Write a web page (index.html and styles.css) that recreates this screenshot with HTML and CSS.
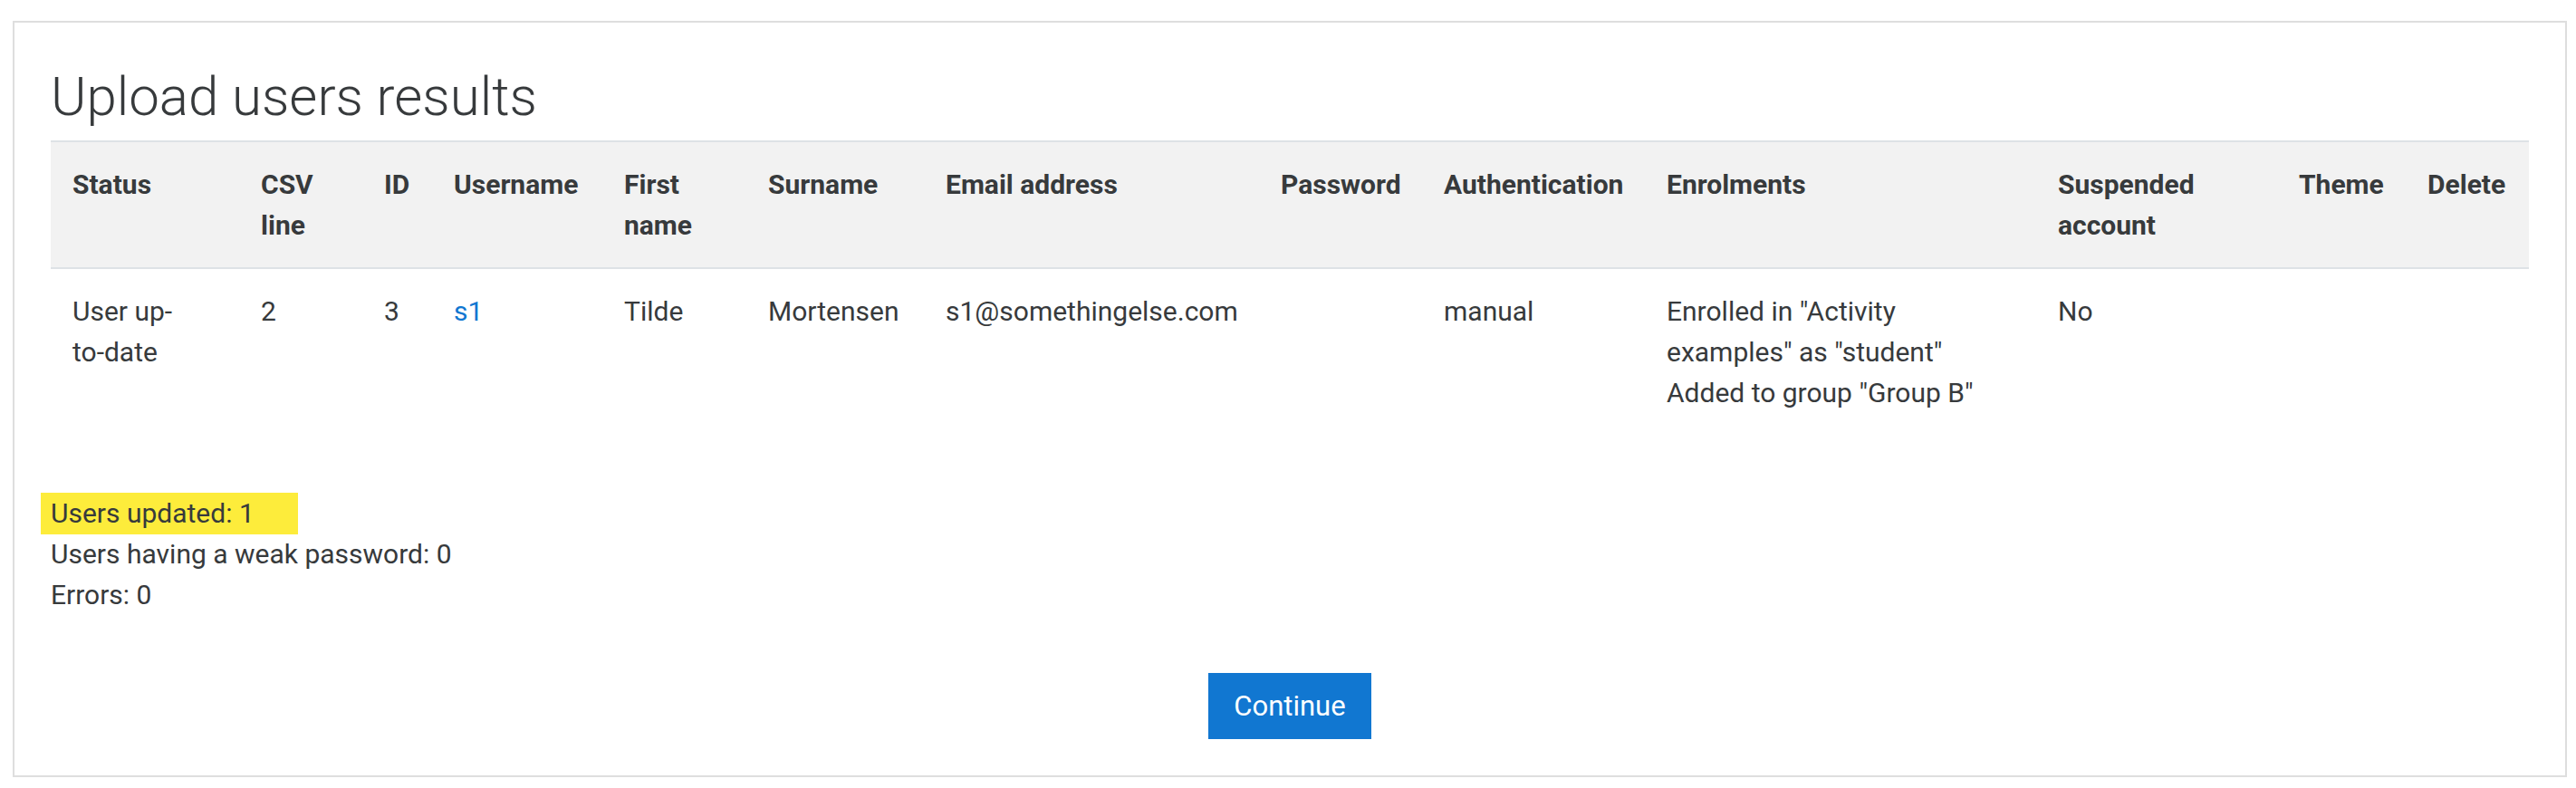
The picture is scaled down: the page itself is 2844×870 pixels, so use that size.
FILE: index.html
```html
<!DOCTYPE html>
<html lang="en">
<head>
<meta charset="utf-8">
<title>Upload users results</title>
<link rel="stylesheet" href="styles.css">
</head>
<body>
<div class="panel">
  <h2 class="title">Upload users results</h2>
  <table class="results">
    <colgroup>
      <col class="c-status"><col class="c-csv"><col class="c-id"><col class="c-user"><col class="c-first"><col class="c-sur"><col class="c-email"><col class="c-pass"><col class="c-auth"><col class="c-enrol"><col class="c-susp"><col class="c-theme"><col class="c-del">
    </colgroup>
    <thead>
      <tr>
        <th>Status</th>
        <th>CSV line</th>
        <th>ID</th>
        <th>Username</th>
        <th>First name</th>
        <th>Surname</th>
        <th>Email address</th>
        <th>Password</th>
        <th>Authentication</th>
        <th>Enrolments</th>
        <th>Suspended account</th>
        <th>Theme</th>
        <th>Delete</th>
      </tr>
    </thead>
    <tbody>
      <tr>
        <td class="status">User up-to-date</td>
        <td>2</td>
        <td>3</td>
        <td><a class="link" href="#">s1</a></td>
        <td>Tilde</td>
        <td>Mortensen</td>
        <td>s1@somethingelse.com</td>
        <td></td>
        <td>manual</td>
        <td>Enrolled in "Activity examples" as "student"<br>Added to group "Group B"</td>
        <td>No</td>
        <td></td>
        <td></td>
      </tr>
    </tbody>
  </table>
  <div class="summary">
    <div class="line"><span class="mark">Users updated: 1</span></div>
    <div class="line">Users having a weak password: 0</div>
    <div class="line">Errors: 0</div>
  </div>
  <div class="actions">
    <button class="btn" type="button">Continue</button>
  </div>
</div>
</body>
</html>
```
FILE: styles.css
```css
html, body {
  margin: 0;
  padding: 0;
  background: #ffffff;
}
body {
  padding: 23px 10px 0 14px;
  font-family: Roboto, "Noto Sans", Arial, sans-serif;
  font-size: 30px;
  line-height: 45px;
  color: #373a3c;
}
.panel {
  border: 2px solid #dedede;
  padding: 40px;
}
.title {
  margin: 6px 0 12px 0;
  font-size: 60px;
  line-height: 72px;
  font-weight: 300;
  color: #373a3c;
}
.results {
  width: 100%;
  border-collapse: collapse;
  table-layout: fixed;
  margin-bottom: 64px;
}
.c-status { width: 208px; }
.c-csv { width: 136px; }
.c-id { width: 77px; }
.c-user { width: 188px; }
.c-first { width: 159px; }
.c-sur { width: 196px; }
.c-email { width: 370px; }
.c-pass { width: 180px; }
.c-auth { width: 246px; }
.c-enrol { width: 432px; }
.c-susp { width: 266px; }
.c-theme { width: 142px; }
.c-del { width: 136px; }
.results th {
  background: #f2f2f2;
  border-top: 2px solid #dee2e6;
  border-bottom: 2px solid #dee2e6;
  padding: 24px;
  text-align: left;
  vertical-align: top;
  font-weight: 700;
}
.results td {
  padding: 24px;
  text-align: left;
  vertical-align: top;
}
.results td.status {
  padding-right: 58px;
}
.link {
  color: #1177d1;
  text-decoration: none;
}
.summary {
  margin-bottom: 64px;
}
.line {
  height: 45px;
}
.mark {
  display: inline-block;
  background: #fdec3b;
  padding: 0 48px 0 11px;
  margin-left: -11px;
  line-height: 46px;
}
.actions {
  display: flex;
  justify-content: center;
}
.btn {
  background: #1177d1;
  border: 2px solid #1177d1;
  color: #ffffff;
  font-family: Roboto, "Noto Sans", Arial, sans-serif;
  font-size: 31px;
  line-height: 45px;
  padding: 12px 26px;
  border-radius: 0;
}
```
